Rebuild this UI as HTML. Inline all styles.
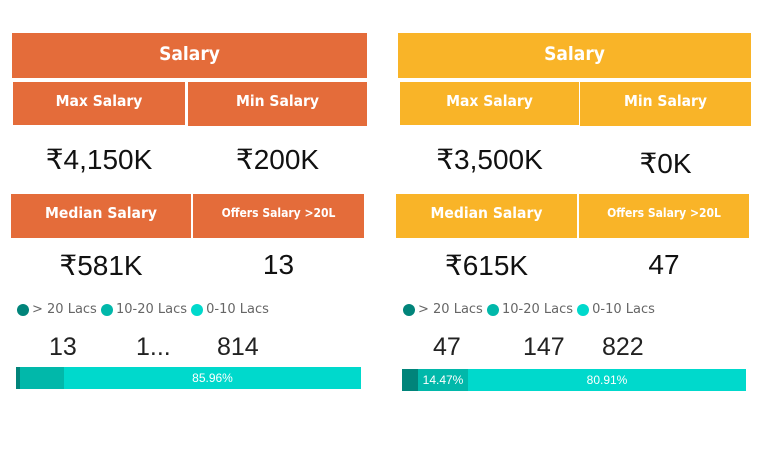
<!DOCTYPE html>
<html><head><meta charset="utf-8"><style>
*{margin:0;padding:0;box-sizing:border-box}
body{width:768px;height:460px;background:#fff;position:relative;overflow:hidden;font-family:"Liberation Sans","DejaVu Sans",sans-serif}
.b{position:absolute;color:#fff;font-weight:bold;display:flex;align-items:center;justify-content:center;font-family:"DejaVu Sans Condensed","Liberation Sans",sans-serif}
.o{background:#E46C3A}
.y{background:#F9B428}
.t{font-size:19px;padding-bottom:4px}
.h{font-size:15.5px;padding-bottom:6px}
.s{font-size:12px;padding-bottom:6px}
.v{position:absolute;font-size:28px;color:#111;text-align:center;font-family:"Liberation Sans","DejaVu Sans",sans-serif}
.lg{position:absolute;font-size:13px;color:#666;display:flex;align-items:center;font-family:"DejaVu Sans","Liberation Sans",sans-serif}
.d{display:inline-block;width:12px;height:12px;border-radius:50%;margin-right:3px}
.n{position:absolute;font-size:25px;color:#222}
.bar{position:absolute;height:22px;color:#fff;font-size:12px;display:flex;align-items:center;justify-content:center}
</style></head><body>
<div class="b o t" style="left:12px;top:33px;width:355px;height:45px">Salary</div>
<div class="b o h" style="left:13px;top:82px;width:172px;height:43px">Max Salary</div>
<div class="b o h" style="left:188px;top:82px;width:179px;height:44px">Min Salary</div>
<div class="v" style="left:13px;top:143px;width:172px">₹4,150K</div>
<div class="v" style="left:188px;top:143px;width:179px">₹200K</div>
<div class="b o h" style="left:11px;top:194px;width:180px;height:44px">Median Salary</div>
<div class="b o s" style="left:193px;top:194px;width:171px;height:44px">Offers Salary &gt;20L</div>
<div class="v" style="left:11px;top:249px;width:180px">₹581K</div>
<div class="v" style="left:193px;top:249px;width:171px">13</div>
<div class="lg" style="left:17px;top:302px"><span class="d" style="background:#01847A"></span>&gt; 20 Lacs&nbsp;<span class="d" style="background:#01B8AA"></span>10-20 Lacs&nbsp;<span class="d" style="background:#00D9CC"></span>0-10 Lacs</div>
<div class="n" style="left:49px;top:333px">13</div>
<div class="n" style="left:136px;top:333px">1...</div>
<div class="n" style="left:217px;top:333px">814</div>
<div class="bar" style="left:16px;top:367px;width:4px;background:#01847A"></div>
<div class="bar" style="left:20px;top:367px;width:44px;background:#01B8AA"></div>
<div class="bar" style="left:64px;top:367px;width:297px;background:#00D9CC">85.96%</div>

<div class="b y t" style="left:398px;top:33px;width:353px;height:45px">Salary</div>
<div class="b y h" style="left:400px;top:82px;width:179px;height:43px">Max Salary</div>
<div class="b y h" style="left:580px;top:82px;width:171px;height:44px">Min Salary</div>
<div class="v" style="left:400px;top:143px;width:179px">₹3,500K</div>
<div class="v" style="left:580px;top:147px;width:171px">₹0K</div>
<div class="b y h" style="left:396px;top:194px;width:181px;height:44px">Median Salary</div>
<div class="b y s" style="left:579px;top:194px;width:170px;height:44px">Offers Salary &gt;20L</div>
<div class="v" style="left:396px;top:249px;width:181px">₹615K</div>
<div class="v" style="left:579px;top:249px;width:170px">47</div>
<div class="lg" style="left:403px;top:302px"><span class="d" style="background:#01847A"></span>&gt; 20 Lacs&nbsp;<span class="d" style="background:#01B8AA"></span>10-20 Lacs&nbsp;<span class="d" style="background:#00D9CC"></span>0-10 Lacs</div>
<div class="n" style="left:433px;top:333px">47</div>
<div class="n" style="left:523px;top:333px">147</div>
<div class="n" style="left:602px;top:333px">822</div>
<div class="bar" style="left:402px;top:369px;width:16px;background:#01847A"></div>
<div class="bar" style="left:418px;top:369px;width:50px;background:#01B8AA">14.47%</div>
<div class="bar" style="left:468px;top:369px;width:278px;background:#00D9CC">80.91%</div>
</body></html>
